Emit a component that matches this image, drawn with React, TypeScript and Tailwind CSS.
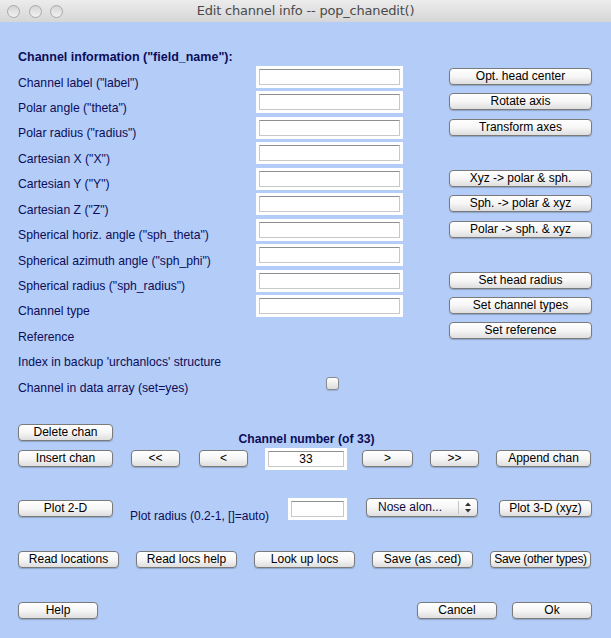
import React from 'react';

const ROW = 'h-[25.45px] shrink-0 flex items-start';

const Btn: React.FC<{ children: React.ReactNode; className?: string }> = ({ children, className = '' }) => (
  <button
    className={`mt-[2px] h-[17px] shrink-0 rounded-[4px] border border-[#7a7a7a] bg-linear-to-b from-white via-[#f6f6f6] to-[#dedede] text-[12px] leading-[15px] text-black shadow-[0_1px_1px_rgba(0,0,0,0.2)] whitespace-nowrap ${className}`}
  >
    {children}
  </button>
);

const Field: React.FC<{ value?: string; className?: string }> = ({ value = '', className = '' }) => (
  <div className={`h-[22px] shrink-0 bg-white p-[3px] ${className}`}>
    <div className="h-full border border-[#c8c8c8] border-t-[#8f8f8f] bg-white text-center text-[12px] leading-[14px] text-black">
      {value}
    </div>
  </div>
);

const Label: React.FC<{ children: React.ReactNode; className?: string }> = ({ children, className = '' }) => (
  <div className={`pt-[9.5px] text-[12.2px] leading-[14px] text-[#0c0c58] whitespace-nowrap ${className}`}>{children}</div>
);

const rows: { label: string; field: boolean; button?: string; check?: boolean }[] = [
  { label: 'Channel label ("label")', field: true, button: 'Opt. head center' },
  { label: 'Polar angle ("theta")', field: true, button: 'Rotate axis' },
  { label: 'Polar radius ("radius")', field: true, button: 'Transform axes' },
  { label: 'Cartesian X ("X")', field: true },
  { label: 'Cartesian Y ("Y")', field: true, button: 'Xyz -> polar & sph.' },
  { label: 'Cartesian Z ("Z")', field: true, button: 'Sph. -> polar & xyz' },
  { label: 'Spherical horiz. angle ("sph_theta")', field: true, button: 'Polar -> sph. & xyz' },
  { label: 'Spherical azimuth angle ("sph_phi")', field: true },
  { label: 'Spherical radius ("sph_radius")', field: true, button: 'Set head radius' },
  { label: 'Channel type', field: true, button: 'Set channel types' },
  { label: 'Reference', field: false, button: 'Set reference' },
  { label: "Index in backup 'urchanlocs' structure", field: false },
  { label: 'Channel in data array (set=yes)', field: false, check: true },
];

export default function App() {
  return (
    <div className="w-[611px] h-[638px] overflow-hidden bg-[#b3cdf8] font-['Liberation_Sans',Arial,sans-serif]">
      {/* title bar */}
      <div className="relative h-[22px] flex items-center bg-linear-to-b from-[#ececec] to-[#d6d6d6]">
        <div className="flex gap-[8.5px] pl-[7px]">
          {[0, 1, 2].map((i) => (
            <span
              key={i}
              className="block w-[13px] h-[13px] rounded-full border border-[#a9a9a9] bg-linear-to-b from-[#d4d4d4] to-[#f2f2f2]"
            />
          ))}
        </div>
        <div className="absolute inset-0 flex items-center justify-center text-[13px] text-[#4a4a4a] font-['DejaVu_Sans',sans-serif] tracking-[-0.2px]">
          Edit channel info -- pop_chanedit()
        </div>
      </div>

      <div className="flex flex-col pt-[18.6px]">
        <div className={ROW}>
          <Label className="pl-[18px] font-bold text-[12.5px]">Channel information ("field_name"):</Label>
        </div>

        {rows.map((r) => (
          <div key={r.label} className={ROW}>
            <Label className="w-[256px] pl-[18px]">{r.label}</Label>
            <div className="w-[147px] shrink-0">
              {r.field && <Field />}
              {r.check && (
                <span className="ml-[70px] mt-[5.5px] block w-[13px] h-[13px] rounded-[3px] border border-[#8a8a8a] bg-linear-to-b from-white to-[#dcdcdc] shadow-[0_1px_1px_rgba(0,0,0,0.15)]" />
              )}
            </div>
            {r.button && <Btn className="ml-[46px] w-[143px]">{r.button}</Btn>}
          </div>
        ))}

        <div className={ROW} />

        <div className={ROW}>
          <Btn className="ml-[18px] w-[95px]">Delete chan</Btn>
          <div className="w-[387px] text-center">
            <Label className="font-bold">Channel number (of 33)</Label>
          </div>
        </div>

        <div className={ROW}>
          <Btn className="ml-[18px] w-[95px]">Insert chan</Btn>
          <Btn className="ml-[18px] w-[49px]">&lt;&lt;</Btn>
          <Btn className="ml-[19px] w-[49px]">&lt;</Btn>
          <Field value="33" className="ml-[17px] w-[82px]" />
          <Btn className="ml-[15px] w-[51px]">&gt;</Btn>
          <Btn className="ml-[17px] w-[49px]">&gt;&gt;</Btn>
          <Btn className="ml-[17px] w-[95px]">Append chan</Btn>
        </div>

        <div className={ROW} />

        <div className={ROW}>
          <Btn className="ml-[18px] w-[95px]">Plot 2-D</Btn>
          <Label className="ml-[17px] w-[158px] pt-[11px] text-[12px]">Plot radius (0.2-1, []=auto)</Label>
          <Field className="w-[59px]" />
          <div className="ml-[19px] h-[19px] w-[112px] shrink-0 flex items-center rounded-[4px] border border-[#7a7a7a] bg-linear-to-b from-white via-[#f6f6f6] to-[#dedede] shadow-[0_1px_1px_rgba(0,0,0,0.2)]">
            <span className="pl-[11px] w-[93px] text-[12px] leading-[15px] text-[#0a0a3c]">Nose alon...</span>
            <span className="h-[13px] w-px bg-[#c4c4c4]" />
            <svg width="18" height="17" viewBox="0 0 18 17" className="shrink-0">
              <path d="M6 7 L9 3.5 L12 7 Z" fill="#333" />
              <path d="M6 10 L9 13.5 L12 10 Z" fill="#333" />
            </svg>
          </div>
          <Btn className="ml-[21px] w-[93px]">Plot 3-D (xyz)</Btn>
        </div>

        <div className={ROW} />

        <div className={`${ROW} pl-[18px] gap-[17px]`}>
          <Btn className="w-[101px]">Read locations</Btn>
          <Btn className="w-[101px]">Read locs help</Btn>
          <Btn className="w-[101px]">Look up locs</Btn>
          <Btn className="w-[101px]">Save (as .ced)</Btn>
          <Btn className="w-[101px] tracking-[-0.3px]">Save (other types)</Btn>
        </div>

        <div className={ROW} />

        <div className={ROW}>
          <Btn className="ml-[18px] w-[80px]">Help</Btn>
          <Btn className="ml-[319px] w-[80px]">Cancel</Btn>
          <Btn className="ml-[15px] w-[80px]">Ok</Btn>
        </div>
      </div>
    </div>
  );
}
